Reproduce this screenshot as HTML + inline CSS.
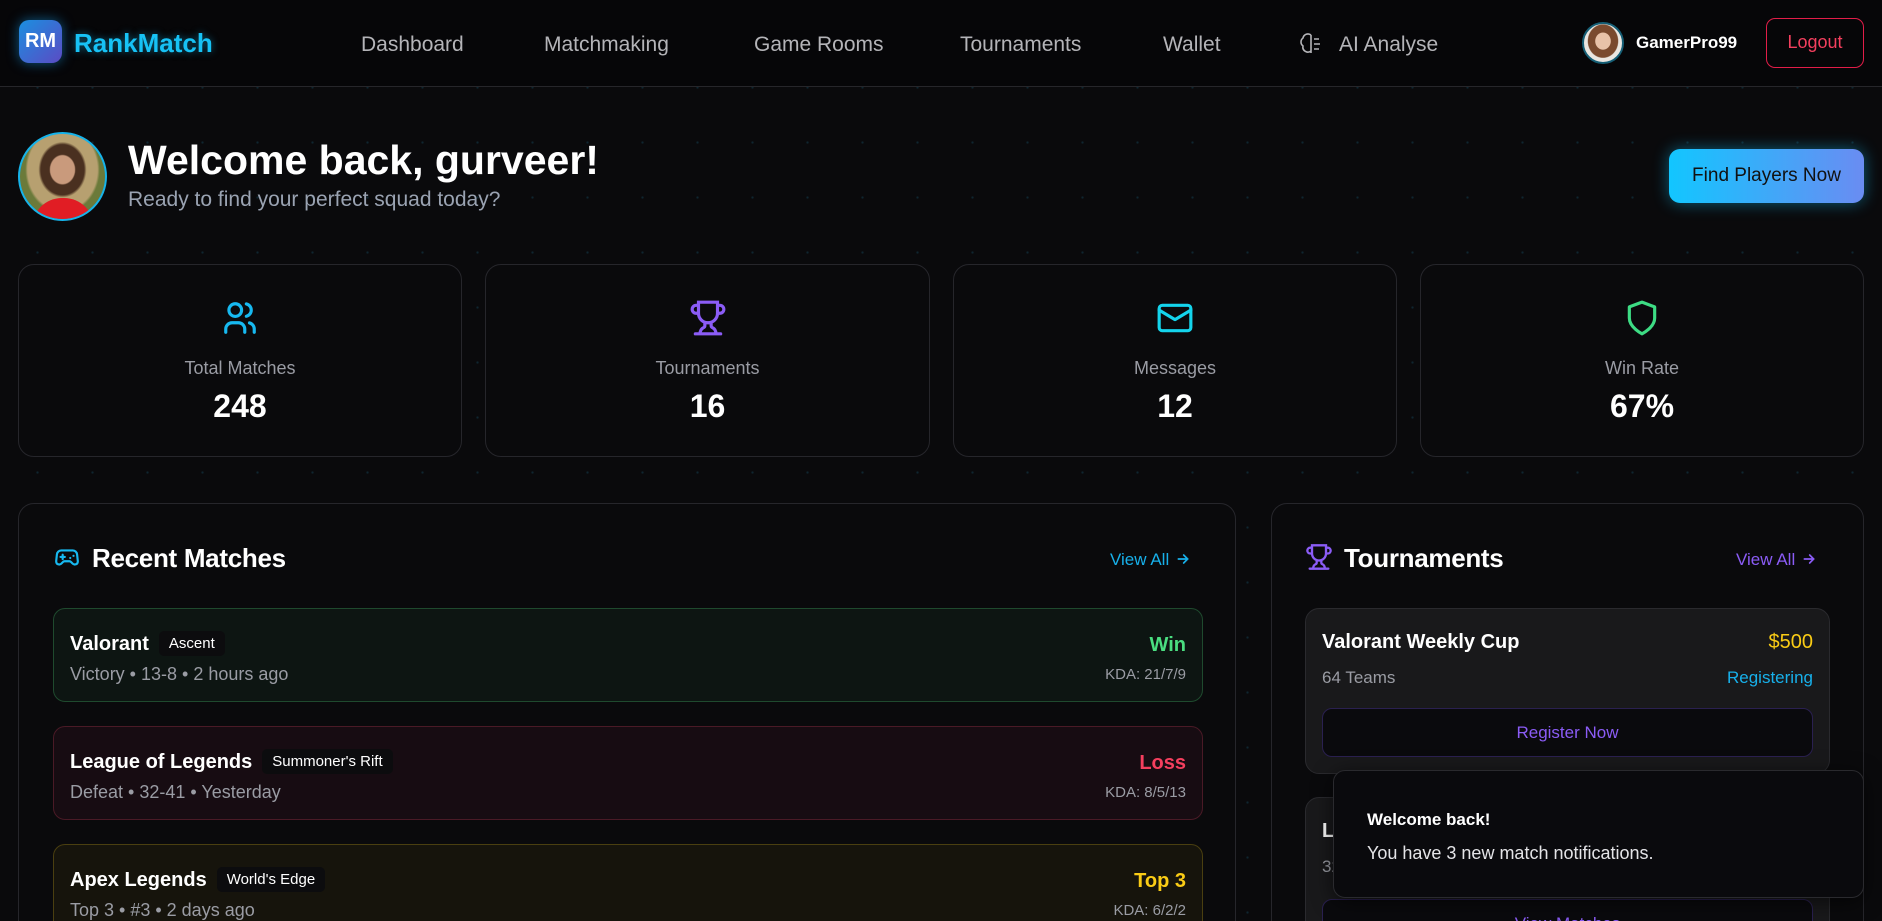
<!DOCTYPE html>
<html><head><meta charset="utf-8"><style>
*{box-sizing:border-box;margin:0;padding:0}
html,body{width:1882px;height:921px;overflow:hidden}
body{background:#0a0a0c;background-image:radial-gradient(circle,#0f2630 1px,transparent 1.3px);background-size:55px 55px;background-position:10px 5px;font-family:"Liberation Sans",sans-serif;color:#fff;position:relative}
.nav{position:absolute;left:0;top:0;width:1882px;height:87px;background:#060608;border-bottom:1px solid #26262a}
.logo{position:absolute;left:19px;top:20px;width:43px;height:43px;border-radius:10px;background:linear-gradient(135deg,#1a8fe0,#5b4bc4);box-shadow:0 0 12px rgba(20,170,255,.5);font-weight:bold;font-size:20px;line-height:43px;text-align:center;color:#fff}
.brand{position:absolute;left:74px;top:28px;font-size:26px;font-weight:bold;color:#17c2f5;text-shadow:0 0 8px rgba(20,190,245,.5)}
.nl{position:absolute;top:33px;font-size:21px;color:#b4b4b8}
.ava{position:absolute;border-radius:50%;overflow:hidden}
.card{position:absolute;border:1px solid #26262b;border-radius:16px;background:#0a0a0c}
.stat{text-align:center}
.stat svg{position:absolute;left:50%;top:34px;margin-left:-19px}
.stat .l{position:absolute;top:93px;width:100%;font-size:18px;color:#9a9ca4}
.stat .n{position:absolute;top:123px;width:100%;font-size:32px;font-weight:bold}
.m{position:absolute;left:53px;width:1150px;height:94px;border-radius:12px}
.m .t{position:absolute;left:16px;top:22px;font-size:20px;font-weight:bold}
.m .b{display:inline-block;margin-left:10px;background:#0c0c0e;font-size:15px;font-weight:normal;padding:4px 10px;border-radius:5px;vertical-align:2px}
.m .s{position:absolute;left:16px;top:55px;font-size:18px;color:#9a9ca4}
.m .r{position:absolute;right:16px;top:25px;font-size:20px;font-weight:bold}
.m .k{position:absolute;right:16px;top:57px;font-size:15px;color:#9a9ca4}
.tc{position:absolute;left:1305px;width:525px;height:166px;background:#19191b;border:1px solid #2a2a2e;border-radius:14px}
.va{position:absolute;top:46px;font-size:17px}
.va svg{vertical-align:-2px;margin-left:6px}
</style></head><body>
<div class="nav">
<div class="logo">RM</div><div class="brand">RankMatch</div>
<div class="nl" style="left:361px">Dashboard</div>
<div class="nl" style="left:544px">Matchmaking</div>
<div class="nl" style="left:754px">Game Rooms</div>
<div class="nl" style="left:960px">Tournaments</div>
<div class="nl" style="left:1163px">Wallet</div>
<svg style="position:absolute;left:1300px;top:32px" width="22" height="24" viewBox="0 0 22 24" fill="none" stroke="#b4b4b8" stroke-width="1.6"><path d="M11 3a5 5 0 0 0-8 3 5 5 0 0 0 0 8 5 5 0 0 0 8 5M11 3v18M14 7h5M14 12h6M14 17h5"/></svg>
<div class="nl" style="left:1339px">AI Analyse</div>
<div class="ava" style="left:1582px;top:22px;width:42px;height:42px;border:2px solid #155e75;background:radial-gradient(ellipse at 50% 45%,#e8c2a8 0 28%,#7a4a2e 30% 55%,#eae6e0 58%)"></div>
<div style="position:absolute;left:1636px;top:33px;font-size:17px;font-weight:bold">GamerPro99</div>
<div style="position:absolute;left:1766px;top:18px;width:98px;height:50px;border:1.5px solid #e11d48;border-radius:9px;color:#f43f5e;font-size:18px;line-height:47px;text-align:center">Logout</div>
</div>

<div class="ava" style="left:18px;top:132px;width:89px;height:89px;border:2px solid #16b3ea;background:radial-gradient(ellipse at 50% 42%,#c99a7c 0 20%,#4a3020 22% 36%,#b7a070 40% 58%,#6b7a3a 62%)"><div style="position:absolute;left:12px;top:64px;width:62px;height:30px;border-radius:30px 30px 0 0;background:#e11d24"></div></div>
<div style="position:absolute;left:128px;top:137px;font-size:41px;font-weight:bold">Welcome back, gurveer!</div>
<div style="position:absolute;left:128px;top:188px;font-size:21px;color:#9aa3b2">Ready to find your perfect squad today?</div>
<div style="position:absolute;left:1669px;top:149px;width:195px;height:54px;border-radius:11px;background:linear-gradient(90deg,#12c6ff,#6a8cf2);box-shadow:0 0 16px rgba(18,198,255,.45);color:#111;font-size:19px;line-height:54px;text-align:center">Find Players Now</div>

<div class="card stat" style="left:18px;top:264px;width:444px;height:193px">
<svg width="38" height="38" viewBox="0 0 24 24" fill="none" stroke="#17b9f0" stroke-width="2" stroke-linecap="round"><circle cx="9" cy="7" r="4"/><path d="M3 21v-2a4 4 0 0 1 4-4h4a4 4 0 0 1 4 4v2M16 3.1a4 4 0 0 1 0 7.8M21 21v-2a4 4 0 0 0-3-3.9"/></svg>
<div class="l">Total Matches</div><div class="n">248</div></div>
<div class="card stat" style="left:485px;top:264px;width:445px;height:193px">
<svg width="38" height="38" viewBox="0 0 24 24" fill="none" stroke="#8b5cf6" stroke-width="2" stroke-linecap="round"><path d="M6 9H4.5a2.5 2.5 0 0 1 0-5H6M18 9h1.5a2.5 2.5 0 0 0 0-5H18M4 22h16M10 14.7V17c0 .6-.5 1-1 1.2C7.8 18.8 7 20.2 7 22M14 14.7V17c0 .6.5 1 1 1.2 1.2.6 2 2 2 3.8M18 2H6v7a6 6 0 0 0 12 0V2z"/></svg>
<div class="l">Tournaments</div><div class="n">16</div></div>
<div class="card stat" style="left:953px;top:264px;width:444px;height:193px">
<svg width="38" height="38" viewBox="0 0 24 24" fill="none" stroke="#14d4ec" stroke-width="2" stroke-linecap="round" stroke-linejoin="round"><rect x="2" y="4" width="20" height="16" rx="2"/><path d="M22 7l-10 6L2 7"/></svg>
<div class="l">Messages</div><div class="n">12</div></div>
<div class="card stat" style="left:1420px;top:264px;width:444px;height:193px">
<svg width="38" height="38" viewBox="0 0 24 24" fill="none" stroke="#3ddc84" stroke-width="2" stroke-linejoin="round"><path d="M12 22s8-4 8-10V5l-8-3-8 3v7c0 6 8 10 8 10z"/></svg>
<div class="l">Win Rate</div><div class="n">67%</div></div>

<div class="card" style="left:18px;top:503px;width:1218px;height:440px">
<svg style="position:absolute;left:35px;top:41px" width="26" height="26" viewBox="0 0 24 24" fill="none" stroke="#17b9f0" stroke-width="2" stroke-linecap="round"><path d="M6 11h4M8 9v4M15 12h.01M18 10h.01"/><path d="M17.3 5H6.7a4 4 0 0 0-4 3.6L2 15c0 2 1 3 3 3 1 0 1.5-.5 2-1l1.4-1.4A2 2 0 0 1 9.8 15h4.4a2 2 0 0 1 1.4.6L17 17c.5.5 1 1 2 1 2 0 3-1 3-3l-.7-6.4A4 4 0 0 0 17.3 5z"/></svg>
<div style="position:absolute;left:73px;top:39px;font-size:26px;font-weight:bold;letter-spacing:-0.3px">Recent Matches</div>
<div class="va" style="left:1091px;color:#17b0ea">View All<svg width="16" height="16" viewBox="0 0 24 24" fill="none" stroke="#17b0ea" stroke-width="2.5" stroke-linecap="round"><path d="M5 12h14M13 6l6 6-6 6"/></svg></div>
</div>
<div class="m" style="top:608px;background:#0d1512;border:1px solid #1f4a2e"><div class="t">Valorant<span class="b">Ascent</span></div><div class="s">Victory • 13-8 • 2 hours ago</div><div class="r" style="color:#4ade80">Win</div><div class="k">KDA: 21/7/9</div></div>
<div class="m" style="top:726px;background:#170c12;border:1px solid #4a1a26"><div class="t">League of Legends<span class="b">Summoner's Rift</span></div><div class="s">Defeat • 32-41 • Yesterday</div><div class="r" style="color:#f43f5e">Loss</div><div class="k">KDA: 8/5/13</div></div>
<div class="m" style="top:844px;height:100px;background:#16140c;border:1px solid #4a3f10"><div class="t">Apex Legends<span class="b">World's Edge</span></div><div class="s">Top 3 • #3 • 2 days ago</div><div class="r" style="color:#facc15">Top 3</div><div class="k">KDA: 6/2/2</div></div>

<div class="card" style="left:1271px;top:503px;width:593px;height:440px">
<svg style="position:absolute;left:33px;top:39px" width="28" height="28" viewBox="0 0 24 24" fill="none" stroke="#8b5cf6" stroke-width="2" stroke-linecap="round"><path d="M6 9H4.5a2.5 2.5 0 0 1 0-5H6M18 9h1.5a2.5 2.5 0 0 0 0-5H18M4 22h16M10 14.7V17c0 .6-.5 1-1 1.2C7.8 18.8 7 20.2 7 22M14 14.7V17c0 .6.5 1 1 1.2 1.2.6 2 2 2 3.8M18 2H6v7a6 6 0 0 0 12 0V2z"/></svg>
<div style="position:absolute;left:72px;top:39px;font-size:26px;font-weight:bold;letter-spacing:-0.3px">Tournaments</div>
<div class="va" style="left:464px;color:#8b5cf6">View All<svg width="16" height="16" viewBox="0 0 24 24" fill="none" stroke="#8b5cf6" stroke-width="2.5" stroke-linecap="round"><path d="M5 12h14M13 6l6 6-6 6"/></svg></div>
</div>
<div class="tc" style="top:608px">
<div style="position:absolute;left:16px;top:22px;font-size:20px;font-weight:bold">Valorant Weekly Cup</div>
<div style="position:absolute;right:16px;top:22px;font-size:20px;color:#facc15">$500</div>
<div style="position:absolute;left:16px;top:59px;font-size:17px;color:#9a9ca4">64 Teams</div>
<div style="position:absolute;right:16px;top:59px;font-size:17px;color:#17b0ea">Registering</div>
<div style="position:absolute;left:16px;top:99px;width:491px;height:49px;border:1px solid #2a2050;border-radius:10px;background:#0a0a0d;color:#8b5cf6;font-size:17px;line-height:47px;text-align:center">Register Now</div>
</div>
<div class="tc" style="top:797px;height:160px">
<div style="position:absolute;left:16px;top:22px;font-size:20px;font-weight:bold">League Championship</div>
<div style="position:absolute;left:16px;top:59px;font-size:17px;color:#9a9ca4">32 Teams</div>
<div style="position:absolute;left:16px;top:101px;width:491px;height:49px;border:1px solid #2a2050;border-radius:10px;background:#0a0a0d;color:#8b5cf6;font-size:17px;line-height:47px;text-align:center">View Matches</div>
</div>
<div style="position:absolute;left:1333px;top:770px;width:531px;height:128px;background:#0a0a0d;border:1px solid #2a2a2e;border-radius:12px;box-shadow:0 4px 20px rgba(0,0,0,.6)">
<div style="position:absolute;left:33px;top:39px;font-size:17px;font-weight:bold">Welcome back!</div>
<div style="position:absolute;left:33px;top:72px;font-size:18px;color:#e4e4e7">You have 3 new match notifications.</div>
</div>
</body></html>
